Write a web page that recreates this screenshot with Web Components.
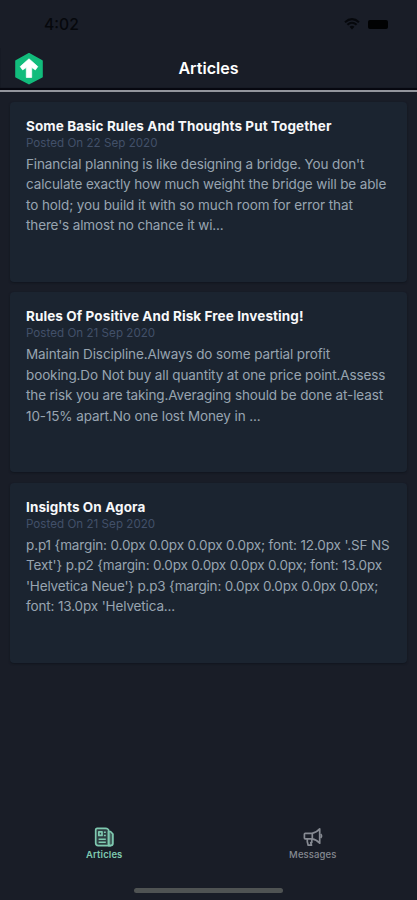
<!DOCTYPE html>
<html lang="en"><head><meta charset="utf-8"><title>Articles</title>
<style>
html,body{margin:0;height:900px;background:#191d27;overflow:hidden}
body{font-family:Inter,"Liberation Sans",sans-serif;color:#fff}
</style></head><body>
<articles-app></articles-app>
<script>
const define = (name, css, html) => customElements.define(name, class extends HTMLElement {
  constructor() {
    super();
    this.attachShadow({ mode: 'open' }).innerHTML = `<style>${css}</style>${html}`;
  }
});

define('status-bar', `
  :host{display:flex;height:48px;box-sizing:border-box;padding:0 29px 0 44px;align-items:center;color:#06080c}
  time{font-size:15.7px;font-weight:500;flex:1}
  .wifi{width:16px;height:12px;margin-right:8px}
  .battery{width:20px;height:9px;border-radius:2px;background:#010203}
`, `<time>4:02</time>
  <svg class="wifi" viewBox="0 0 16 12" fill="none" stroke="#06080c" stroke-width="2.1">
    <path d="M1 4.2Q8-2 15 4.2M3.4 6.8Q8 2.7 12.6 6.8"/><path d="M5.5 8.8Q8 6.6 10.5 8.8L8 11.6Z" fill="#06080c" stroke="none"/></svg>
  <span class="battery"></span>`);

define('nav-header', `
  :host{display:grid;grid-template-columns:1fr auto 1fr;align-items:center;height:44px;box-sizing:border-box;
    padding:1px 13.5px 2px;border-bottom:2px solid #93959c;box-shadow:inset 0 -2px 1px #06070f}
  svg{width:30px;height:33px;display:block}
  h1{margin:0 0 2px;font-size:16.1px;font-weight:600;line-height:22px}
`, `<svg viewBox="0 0 30 33"><path d="M15 1.8 28 9V24.7L15 31.6 2 24.7V9Z" fill="#12bc7c" stroke="#12bc7c" stroke-width="1.6" stroke-linejoin="round"/>
  <path d="M15 6.8 23.8 14.6 21.4 17.9 17.7 15.5V25.5H12.3V15.5L8.6 17.9 6.2 14.6Z" fill="#fff" stroke="#fff" stroke-width=".7" stroke-linejoin="round"/></svg>
  <h1><slot></slot></h1>`);

define('article-card', `
  :host{display:block;height:180.3px;box-sizing:border-box;padding:16.4px 16px 0;border-radius:4px;background:#1b2430;
    box-shadow:0 1px 2px #11151e}
  ::slotted(h2){margin:0;font-size:13.5px;line-height:17px;font-weight:700;letter-spacing:.1px;color:#f7f8fa;white-space:nowrap}
  ::slotted(time){display:block;font-size:11.6px;line-height:16px;letter-spacing:.03px;color:#425069;white-space:nowrap}
  .body{margin-top:3px;font-size:13.5px;line-height:20.4px;color:#98a4b1;white-space:nowrap}
`, `<slot name="title"></slot><slot name="date"></slot><div class="body"><slot></slot></div>`);

define('text-line', `:host{display:block;letter-spacing:-.13px}`, `<slot></slot>`);

define('tab-item', `
  :host{display:flex;flex-direction:column;align-items:center;flex:1;color:#868a92;font-size:9.5px;line-height:12px;font-weight:500;letter-spacing:.1px}
  :host([active]){color:#7fc9b0;font-weight:600}
  span{margin-top:1px}
`, `<slot name="icon"></slot><span><slot></slot></span>`);

define('tab-bar', `:host{display:flex;height:59px}`, `<slot></slot>`);
define('home-indicator', `:host{display:block;width:149px;height:5px;border-radius:3px;background:#4f5353;margin:0 auto}`, ``);

define('articles-app', `
  :host{display:flex;flex-direction:column;height:900px;width:417px;background:#191d27}
  main{display:flex;flex-direction:column;gap:10.2px;padding:9.6px 10px 0;flex:1}
  tab-bar{margin-bottom:2.5px}
  home-indicator{margin-bottom:7.5px}
  svg{width:22px;height:22px;display:block}
`, `<status-bar></status-bar><nav-header>Articles</nav-header>
<main>
<article-card><h2 slot="title">Some Basic Rules And Thoughts Put Together</h2><time slot="date">Posted On 22 Sep 2020</time>
<text-line>Financial planning is like designing a bridge. You don't</text-line><text-line>calculate exactly how much weight the bridge will be able</text-line><text-line style="letter-spacing:-.09px">to hold; you build it with so much room for error that</text-line><text-line>there's almost no chance it wi...</text-line></article-card>
<article-card><h2 slot="title">Rules Of Positive And Risk Free Investing!</h2><time slot="date">Posted On 21 Sep 2020</time>
<text-line style="letter-spacing:-.115px">Maintain Discipline.Always do some partial profit</text-line><text-line style="letter-spacing:-.115px">booking.Do Not buy all quantity at one price point.Assess</text-line><text-line style="letter-spacing:-.12px">the risk you are taking.Averaging should be done at-least</text-line><text-line style="letter-spacing:-.11px">10-15% apart.No one lost Money in ...</text-line></article-card>
<article-card><h2 slot="title">Insights On Agora</h2><time slot="date">Posted On 21 Sep 2020</time>
<text-line style="letter-spacing:-.14px">p.p1 {margin: 0.0px 0.0px 0.0px 0.0px; font: 12.0px '.SF NS</text-line><text-line style="letter-spacing:-.17px">Text'} p.p2 {margin: 0.0px 0.0px 0.0px 0.0px; font: 13.0px</text-line><text-line style="letter-spacing:-.18px">'Helvetica Neue'} p.p3 {margin: 0.0px 0.0px 0.0px 0.0px;</text-line><text-line style="letter-spacing:-.14px">font: 13.0px 'Helvetica...</text-line></article-card>
</main>
<tab-bar>
<tab-item active><svg slot="icon" viewBox="0 0 22 22" fill="none" stroke="currentColor" stroke-width="1.7" stroke-linejoin="round">
<path d="M4.2 2.3H12.5Q14 2.3 14.7 3L15.6 4V17.8Q15.6 19.6 17.4 19.6H5.2Q2.7 19.6 2.7 17V4Q2.7 2.3 4.2 2.3Z" fill="#7fc9b033"/><path d="M15.6 5.5H17.5L19.9 8V17.6Q19.9 19.6 17.4 19.6H15.6Z" fill="#7fc9b066"/><path d="M5.6 13.2H12.8M5.6 16.3H12.8M10.9 6.2H12.8M10.9 9.4H12.8" stroke-width="1.5"/><rect x="5.8" y="5.8" width="3.2" height="3.6"/></svg>Articles</tab-item>
<tab-item><svg slot="icon" viewBox="0 0 22 22" fill="none" stroke="currentColor" stroke-width="1.7" stroke-linejoin="round">
<path d="M3.2 7.3H10Q14.3 6.8 17.7 2.8V17.2Q14.3 13.4 10 12.9H3.2Q2.4 12.9 2.4 12V8.2Q2.4 7.3 3.2 7.3Z"/><path d="M10.3 7.3V12.9M5.3 12.9V15.7L6.2 19.2H9.5L8.7 16.5H9.8V13"/><path d="M18.6 8.2Q20.5 10 18.6 11.8"/></svg>Messages</tab-item>
</tab-bar><home-indicator></home-indicator>`);
</script></body></html>
